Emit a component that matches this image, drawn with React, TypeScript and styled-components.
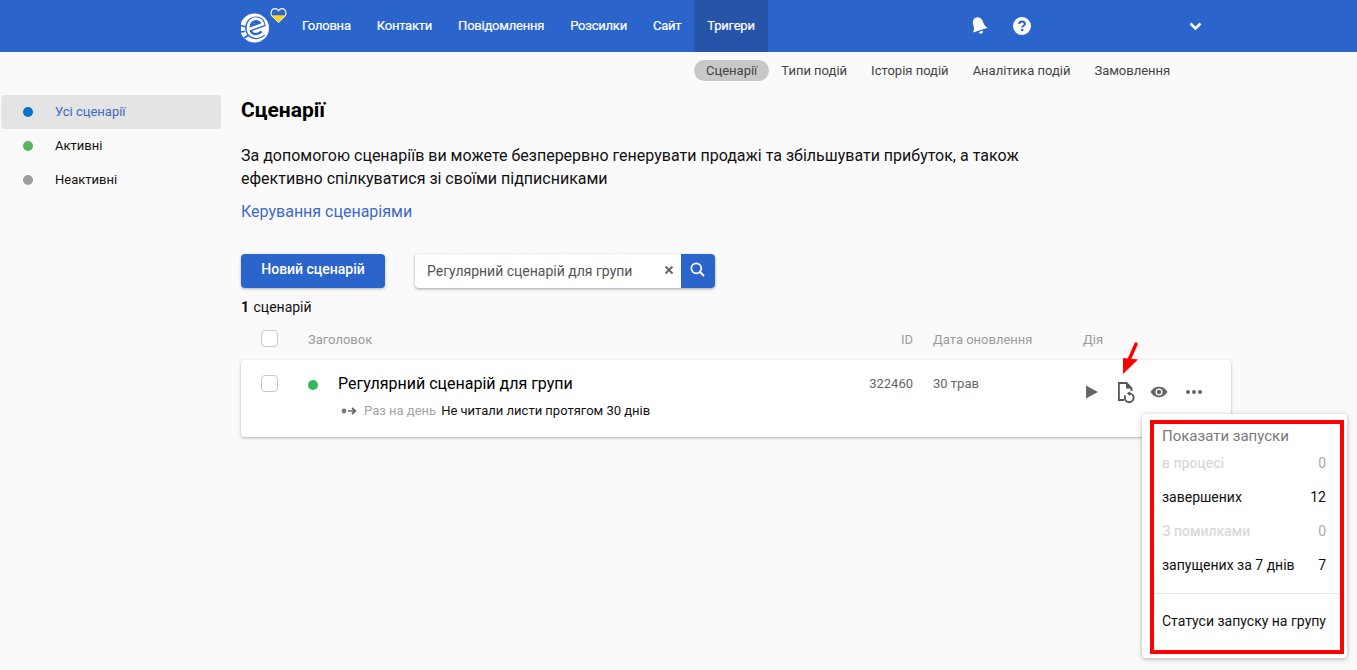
import React from "react";
import styled, { createGlobalStyle } from "styled-components";

const Global = createGlobalStyle`
  html, body { margin: 0; padding: 0; background: #fafafa; }
  body { font-family: Roboto, "Liberation Sans", sans-serif; color: #000; }
  * { box-sizing: border-box; }
`;

const Page = styled.div`
  width: 1357px;
  height: 670px;
  overflow: hidden;
  background: #fafafa;
`;
const Header = styled.header`
  height: 52px;
  background: #2b65cc;
  display: flex;
  align-items: stretch;
  padding-left: 241px;
`;
const LogoBox = styled.div`
  width: 48px;
  display: flex;
  align-items: flex-start;
  padding-top: 7px;
`;
const Nav = styled.nav`
  display: flex;
`;
const NavItem = styled.a<{ $active?: boolean }>`
  display: flex;
  align-items: center;
  padding: 0 13px 2px;
  color: #fff;
  font-size: 13px;
  font-weight: 400;
  letter-spacing: -0.22px;
  -webkit-text-stroke: 0.2px #fff;
  background: ${(p) => (p.$active ? "#2554a8" : "transparent")};
`;
const HeaderIcons = styled.div`
  display: flex;
  align-items: center;
  margin-left: 202px;
  gap: 25px;
`;
const Chevron = styled.div`
  margin-left: 158px;
  display: flex;
  align-items: center;
`;
const SubNav = styled.div`
  height: 36px;
  display: flex;
  align-items: center;
  padding-left: 694px;
  padding-top: 1px;
`;
const SubItem = styled.a<{ $active?: boolean }>`
  height: 21px;
  line-height: 21px;
  padding: 0 12px;
  border-radius: 11px;
  font-size: 13px;
  color: #444;
  background: ${(p) => (p.$active ? "#c8c8c8" : "transparent")};
`;
const Body = styled.div`
  display: flex;
  align-items: flex-start;
`;
const Side = styled.aside`
  width: 220px;
  margin-left: 1px;
  padding-top: 7px;
`;
const SideItem = styled.div<{ $active?: boolean }>`
  height: 34px;
  display: flex;
  align-items: center;
  padding-left: 22px;
  gap: 22px;
  border-radius: 4px;
  font-size: 13px;
  color: ${(p) => (p.$active ? "#3c69c9" : "#111")};
  background: ${(p) => (p.$active ? "#e4e4e4" : "transparent")};
`;
const SideLabel = styled.span`
  padding-bottom: 2px;
`;
const SideDot = styled.span<{ $color: string }>`
  width: 10px;
  height: 10px;
  border-radius: 50%;
  background: ${(p) => p.$color};
`;
const Main = styled.main`
  width: 990px;
  margin-left: 20px;
`;
const Title = styled.h1`
  margin: 9px 0 0;
  font-size: 21px;
  line-height: 26px;
  font-weight: 700;
`;
const Lead = styled.p`
  margin: 22px 0 0;
  font-size: 16px;
  line-height: 22.5px;
  width: 800px;
  color: #111;
`;
const ManageLink = styled.a`
  display: block;
  margin-top: 11px;
  font-size: 16px;
  line-height: 22px;
  color: #3c69c9;
`;
const Toolbar = styled.div`
  display: flex;
  margin-top: 31px;
  gap: 30px;
`;
const PrimaryButton = styled.button`
  width: 144px;
  height: 34px;
  padding: 0 0 4px;
  border: 0;
  border-radius: 4px;
  background: #2b65cc;
  color: #fff;
  font: 500 14px Roboto, sans-serif;
  box-shadow: 0 1px 3px rgba(0, 0, 0, 0.3);
`;
const Search = styled.div`
  width: 300px;
  height: 34px;
  display: flex;
  align-items: center;
  background: #fff;
  border-radius: 4px;
  overflow: hidden;
  box-shadow: 0 1px 3px rgba(0, 0, 0, 0.35);
  padding-left: 12px;
  font-size: 14px;
  color: #555;
`;
const SearchText = styled.span`
  flex: 1;
`;
const SearchClear = styled.span`
  display: flex;
  margin-right: 7px;
  margin-bottom: 3px;
`;
const SearchButton = styled.span`
  width: 34px;
  height: 34px;
  padding: 0 2px 3px 0;
  background: #2b65cc;
  display: flex;
  align-items: center;
  justify-content: center;
`;
const Count = styled.div`
  margin-top: 11px;
  font-size: 14px;
  line-height: 16px;
  color: #111;
  b { font-weight: 700; margin-right: 1px; }
`;
const TableHead = styled.div`
  height: 39px;
  margin-top: 6px;
  padding: 0 0 4px 20px;
  display: flex;
  align-items: center;
  font-size: 13px;
  color: #9a9a9a;
`;
const Check = styled.span`
  width: 17px;
  height: 17px;
  flex: none;
  border: 1px solid #c9c9c9;
  border-radius: 4px;
  background: #fff;
`;
const HeadTitle = styled.span`
  margin-left: 30px;
  width: 585px;
  padding-top: 2px;
`;
const HeadId = styled.span`
  width: 20px;
  padding-top: 2px;
  text-align: right;
`;
const HeadDate = styled.span`
  margin-left: 20px;
  width: 150px;
  padding-top: 2px;
`;
const HeadAction = styled.span`
  padding-top: 2px;
`;
const Card = styled.div`
  position: relative;
  height: 77px;
  background: #fff;
  border-radius: 4px;
  box-shadow: 0 1px 3px rgba(0, 0, 0, 0.3);
  display: flex;
  align-items: flex-start;
  padding: 15px 0 0 20px;
`;
const StatusDot = styled.span`
  width: 10px;
  height: 10px;
  border-radius: 50%;
  background: #34b95a;
  margin: 5px 0 0 30px;
  flex: none;
`;
const CardText = styled.div`
  margin-left: 20px;
  width: 520px;
`;
const CardName = styled.div`
  font-size: 16px;
  line-height: 18px;
`;
const CardMeta = styled.div`
  display: flex;
  align-items: center;
  gap: 5px;
  margin: 10px 0 0 3px;
  font-size: 13px;
  line-height: 16px;
  color: #111;
`;
const MetaLabel = styled.span`
  color: #a3a3a3;
  margin-left: 2px;
`;
const CardId = styled.span`
  width: 55px;
  margin-top: 1px;
  font-size: 13px;
  line-height: 16px;
  text-align: right;
  color: #666;
`;
const CardDate = styled.span`
  width: 148px;
  margin: 1px 0 0 20px;
  font-size: 13px;
  line-height: 16px;
  color: #666;
`;
const Actions = styled.div`
  display: flex;
  align-items: center;
  gap: 12px;
  margin-top: 5px;
`;
const DotsSlot = styled.span`
  display: flex;
  margin-left: 4px;
`;
const Arrow = styled.svg`
  position: absolute;
  left: 874px;
  top: -19px;
`;
const Popover = styled.div`
  position: absolute;
  left: 901px;
  top: 54px;
  width: 205px;
  height: 244px;
  background: #fff;
  border-radius: 4px;
  box-shadow: 0 1px 5px rgba(0, 0, 0, 0.3);
  padding: 6px 3px 4px 8px;
`;
const RedFrame = styled.div`
  width: 194px;
  height: 234px;
  border: 4px solid #f00;
  padding: 4px 14px 0 8px;
  font-size: 14px;
  display: flex;
  flex-direction: column;
`;
const PopTitle = styled.div`
  font-size: 15px;
  line-height: 16px;
  color: #7a7a7a;
  margin-bottom: 2px;
`;
const PopRow = styled.div<{ $muted?: boolean }>`
  display: flex;
  justify-content: space-between;
  height: 34px;
  align-items: center;
  font-size: 14px;
  font-weight: ${(p) => (p.$muted ? 500 : 400)};
  color: ${(p) => (p.$muted ? "#dadada" : "#111")};
`;
const PopCount = styled.span<{ $muted?: boolean }>`
  font-weight: 400;
  color: ${(p) => (p.$muted ? "#aaa" : "#111")};
`;
const PopDivider = styled.div`
  height: 1px;
  background: #e6e6e6;
  margin: 11px -14px 0 -8px;
`;
const PopLink = styled.div`
  margin-top: 19px;
  line-height: 16px;
  color: #111;
  white-space: nowrap;
`;

const Logo = () => (
  <svg width="47" height="38" viewBox="0 0 47 38">
    <circle cx="13.5" cy="21" r="14.5" fill="#fff" />
    <path d="M5 22.5 L21 17 C20 12.5 14 11.5 10.5 14 C6.5 17 6.5 24.5 10 27.5 C13.5 30 18.5 29 22 26" fill="none" stroke="#2b65cc" strokeWidth="6.4" />
    <path d="M6 23 L22 17.2 C20.5 11 13.5 10.5 10 13.5 C6 17 6 25 10 28 C14 30.5 19 29.5 23 26" fill="none" stroke="#fff" strokeWidth="2.6" />
    <path d="M0 18.5 L5 20 M-1 25 L4 24.5 M3 31 L7 28.5" stroke="#2b65cc" strokeWidth="1.6" />
    <path d="M37.5 15.2 L31 9 C28.8 6.2 30.5 1.6 33.8 1.6 C35.4 1.6 36.8 2.4 37.5 3.7 C38.2 2.4 39.6 1.6 41.2 1.6 C44.5 1.6 46.2 6.2 44 9 Z" fill="#2b65cc" stroke="#fff" strokeWidth="1.1" />
    <path d="M31 8.2 L44 8.2 C43.4 9.6 41.8 11.2 37.5 14.9 C33.2 11.2 31.6 9.6 31 8.2 Z" fill="#f7d51d" />
  </svg>
);
const Bell = () => (
  <svg width="18" height="20" viewBox="0 0 18 20">
    <g transform="rotate(-18 9 10)" fill="#fff">
      <path d="M9 1 C5.2 1 3.9 4.2 3.9 7.5 C3.9 11 3 12.8 1.2 14.4 H16.8 C15 12.8 14.1 11 14.1 7.5 C14.1 4.2 12.8 1 9 1 Z" />
      <path d="M6.8 15.6 H11.2 C11.2 17 10.2 17.9 9 17.9 C7.8 17.9 6.8 17 6.8 15.6 Z" />
    </g>
  </svg>
);
const Help = () => (
  <svg width="18" height="18" viewBox="0 0 18 18">
    <circle cx="9" cy="9" r="9" fill="#fff" />
    <path d="M6.2 7 C6.2 5.3 7.5 4.4 9 4.4 C10.6 4.4 11.9 5.4 11.9 6.9 C11.9 8.6 9.2 8.9 9.2 10.6" fill="none" stroke="#2b65cc" strokeWidth="2" />
    <rect x="8" y="11.8" width="2.3" height="2.2" fill="#2b65cc" />
  </svg>
);
const ChevronDown = () => (
  <svg width="13" height="9" viewBox="0 0 13 9">
    <path d="M1.5 1.5 L6.5 6.5 L11.5 1.5" fill="none" stroke="#fff" strokeWidth="2.6" />
  </svg>
);
const Clear = () => (
  <svg width="10" height="10" viewBox="0 0 10 10">
    <path d="M1.5 1.5 L8.5 8.5 M8.5 1.5 L1.5 8.5" stroke="#666" strokeWidth="2" />
  </svg>
);
const SearchIcon = () => (
  <svg width="15" height="15" viewBox="0 0 15 15">
    <circle cx="6.3" cy="6.3" r="5" fill="none" stroke="#fff" strokeWidth="1.7" />
    <path d="M10 10 L14 14" stroke="#fff" strokeWidth="1.9" />
  </svg>
);
const Flow = () => (
  <svg width="16" height="8" viewBox="0 0 16 8">
    <circle cx="3" cy="4" r="2.4" fill="#777" />
    <path d="M7 4 H14 M11 1 L14.4 4 L11 7" fill="none" stroke="#666" strokeWidth="1.7" />
  </svg>
);
const Play = () => (
  <svg width="22" height="22" viewBox="0 0 22 22">
    <path d="M5 4.5 L17 11 L5 17.5 Z" fill="#666" />
  </svg>
);
const RunLog = () => (
  <svg width="22" height="24" viewBox="0 0 22 24">
    <path d="M9 20 H3.9 V3 H11.5 L16.5 8 V11" fill="none" stroke="#555" strokeWidth="1.8" />
    <path d="M11 3 V8.5 H16.5 Z" fill="#555" />
    <circle cx="14.2" cy="17.8" r="5.6" fill="#fff" />
    <circle cx="14.2" cy="17.8" r="4.4" fill="none" stroke="#555" strokeWidth="1.9" />
    <rect x="10" y="12.4" width="3.2" height="3.2" fill="#fff" />
    <path d="M15.2 11.2 V16 L11.9 13.6 Z" fill="#555" />
  </svg>
);
const Eye = () => (
  <svg width="20" height="14" viewBox="0 0 20 14">
    <path d="M1.5 7 C4 3 7 1.8 10 1.8 C13 1.8 16 3 18.5 7 C16 11 13 12.2 10 12.2 C7 12.2 4 11 1.5 7 Z" fill="#666" />
    <circle cx="10" cy="7" r="3.5" fill="#fff" />
    <circle cx="10" cy="7" r="2.2" fill="#666" />
  </svg>
);
const Dots = () => (
  <svg width="18" height="6" viewBox="0 0 18 6">
    <circle cx="3" cy="3" r="2" fill="#666" />
    <circle cx="9" cy="3" r="2" fill="#666" />
    <circle cx="15" cy="3" r="2" fill="#666" />
  </svg>
);

export default function App() {
  return (
    <Page>
      <Global />
      <Header>
        <LogoBox><Logo /></LogoBox>
        <Nav>
          <NavItem>Головна</NavItem>
          <NavItem>Контакти</NavItem>
          <NavItem>Повідомлення</NavItem>
          <NavItem>Розсилки</NavItem>
          <NavItem>Сайт</NavItem>
          <NavItem $active>Тригери</NavItem>
        </Nav>
        <HeaderIcons>
          <Bell />
          <Help />
        </HeaderIcons>
        <Chevron><ChevronDown /></Chevron>
      </Header>
      <SubNav>
        <SubItem $active>Сценарії</SubItem>
        <SubItem>Типи подій</SubItem>
        <SubItem>Історія подій</SubItem>
        <SubItem>Аналітика подій</SubItem>
        <SubItem>Замовлення</SubItem>
      </SubNav>
      <Body>
        <Side>
          <SideItem $active><SideDot $color="#0a72c4" /><SideLabel>Усі сценарії</SideLabel></SideItem>
          <SideItem><SideDot $color="#57b45f" /><SideLabel>Активні</SideLabel></SideItem>
          <SideItem><SideDot $color="#9e9e9e" /><SideLabel>Неактивні</SideLabel></SideItem>
        </Side>
        <Main>
          <Title>Сценарії</Title>
          <Lead>
            За допомогою сценаріїв ви можете безперервно генерувати продажі та збільшувати прибуток, а також
            ефективно спілкуватися зі своїми підписниками
          </Lead>
          <ManageLink>Керування сценаріями</ManageLink>
          <Toolbar>
            <PrimaryButton>Новий сценарій</PrimaryButton>
            <Search>
              <SearchText>Регулярний сценарій для групи</SearchText>
              <SearchClear><Clear /></SearchClear>
              <SearchButton><SearchIcon /></SearchButton>
            </Search>
          </Toolbar>
          <Count><b>1</b> сценарій</Count>
          <TableHead>
            <Check />
            <HeadTitle>Заголовок</HeadTitle>
            <HeadId>ID</HeadId>
            <HeadDate>Дата оновлення</HeadDate>
            <HeadAction>Дія</HeadAction>
          </TableHead>
          <Card>
            <Check />
            <StatusDot />
            <CardText>
              <CardName>Регулярний сценарій для групи</CardName>
              <CardMeta>
                <Flow />
                <MetaLabel>Раз на день</MetaLabel>
                Не читали листи протягом 30 днів
              </CardMeta>
            </CardText>
            <CardId>322460</CardId>
            <CardDate>30 трав</CardDate>
            <Actions>
              <Play />
              <RunLog />
              <Eye />
              <DotsSlot><Dots /></DotsSlot>
            </Actions>
            <Arrow width="26" height="36" viewBox="0 0 26 36">
              <path d="M21 3 L14 19" stroke="#f00" strokeWidth="3.4" strokeLinecap="round" />
              <path d="M8 17 L23 18.5 L8 33 Z" fill="#f00" />
            </Arrow>
            <Popover>
              <RedFrame>
                <PopTitle>Показати запуски</PopTitle>
                <PopRow $muted>в процесі<PopCount $muted>0</PopCount></PopRow>
                <PopRow>завершених<PopCount>12</PopCount></PopRow>
                <PopRow $muted>З помилками<PopCount $muted>0</PopCount></PopRow>
                <PopRow>запущених за 7 днів<PopCount>7</PopCount></PopRow>
                <PopDivider />
                <PopLink>Статуси запуску на групу</PopLink>
              </RedFrame>
            </Popover>
          </Card>
        </Main>
      </Body>
    </Page>
  );
}
